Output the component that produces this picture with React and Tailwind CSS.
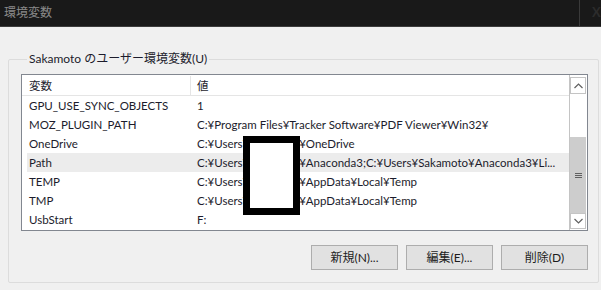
import React from 'react';

const rows = [
  { name: 'GPU_USE_SYNC_OBJECTS', value: '1' },
  { name: 'MOZ_PLUGIN_PATH', value: 'C:¥Program Files¥Tracker Software¥PDF Viewer¥Win32¥' },
  { name: 'OneDrive', value: 'C:¥Users¥Sakamoto¥OneDrive' },
  { name: 'Path', value: 'C:¥Users¥Sakamoto¥Anaconda3;C:¥Users¥Sakamoto¥Anaconda3¥Li...', selected: true },
  { name: 'TEMP', value: 'C:¥Users¥Sakamoto¥AppData¥Local¥Temp' },
  { name: 'TMP', value: 'C:¥Users¥Sakamoto¥AppData¥Local¥Temp' },
  { name: 'UsbStart', value: 'F:' },
];

const font = { fontFamily: 'Lato, "Noto Sans CJK JP", sans-serif' };

const App = () => {
  return (
    <div className="w-[601px] h-[290px] bg-[#f0f0f0] overflow-hidden flex flex-col text-[11.5px] text-[#1c1c2c]" style={font}>
      {/* title bar */}
      <div className="h-[27px] shrink-0 bg-[#191919] border-b border-[#3c3c3c] flex items-center">
        <div className="pl-[4px] text-[#8a8a8a] text-[12px] flex-1">環境変数</div>
        <div className="w-[22px] h-full border-l border-[#3a3a3a] flex items-center pl-[12px] text-[#2c2c2c] font-bold text-[13px]">X</div>
      </div>

      <div className="flex-1 pl-[8px] pr-[2px] pt-[24px] pb-[7px] flex min-w-0">
        <fieldset className="flex-1 min-w-0 border border-[#dcdcdc] rounded-[2px] pl-[12px] pr-[10px] pt-[7px] flex flex-col">
          <legend className="ml-[6px] px-[2px] leading-[16px] text-[12px]">Sakamoto のユーザー環境変数(U)</legend>

          <div className="h-[157px] border border-[#828790] bg-white flex relative">
            <div className="flex-1 flex flex-col min-w-0">
              <div className="h-[21px] flex border-b border-[#e5e5e5] items-center shrink-0 pt-[1px]">
                <div className="w-[169px] h-full pl-[7px] flex items-center border-r border-[#e5e5e5]">変数</div>
                <div className="pl-[6px] flex items-center">値</div>
              </div>
              {rows.map((r) => (
                <div key={r.name} className="h-[19px] flex items-center pl-[5px]">
                  <div className={`flex-1 min-w-0 h-full flex items-center pt-[1px] ${r.selected ? 'bg-[#ececec]' : ''}`}>
                    <div className="w-[164px] shrink-0 pl-[2px] whitespace-nowrap">{r.name}</div>
                    <div className="pl-[6px] whitespace-nowrap">{r.value}</div>
                  </div>
                </div>
              ))}
            </div>

            {/* scrollbar */}
            <div className="w-[18px] shrink-0 flex flex-col bg-white border-l border-[#c4c4c4] py-[1px] pr-[1px]">
              <div className="h-[17px] border border-[#c4c4c4] flex items-center justify-center mt-[1px]">
                <svg width="9" height="6" viewBox="0 0 9 6"><path d="M0.5 5 L4.5 1 L8.5 5" fill="none" stroke="#606060" strokeWidth="1.2" /></svg>
              </div>
              <div className="h-[43px]" />
              <div className="flex-1 bg-[#cdcdcd] flex items-center justify-center">
                <svg width="7" height="7" viewBox="0 0 7 7"><path d="M0 1.5 H7 M0 3.5 H7 M0 5.5 H7" stroke="#606060" strokeWidth="1" /></svg>
              </div>
              <div className="h-[16px] border border-[#c4c4c4] flex items-center justify-center">
                <svg width="9" height="6" viewBox="0 0 9 6"><path d="M0.5 1 L4.5 5 L8.5 1" fill="none" stroke="#606060" strokeWidth="1.2" /></svg>
              </div>
            </div>

            {/* redaction box */}
            <div className="absolute left-[221px] top-[61px] w-[57px] h-[79px] bg-white border-[7px] border-black" />
          </div>

          <div className="flex justify-end gap-[8px] mt-[14px]">
            {['新規(N)...', '編集(E)...', '削除(D)'].map((t) => (
              <button key={t} className="w-[87px] h-[25px] bg-[#e1e1e1] border border-[#adadad] text-[12px] text-[#1c1c1c] flex items-center justify-center">
                {t}
              </button>
            ))}
          </div>
        </fieldset>
      </div>
    </div>
  );
};

export default App;
